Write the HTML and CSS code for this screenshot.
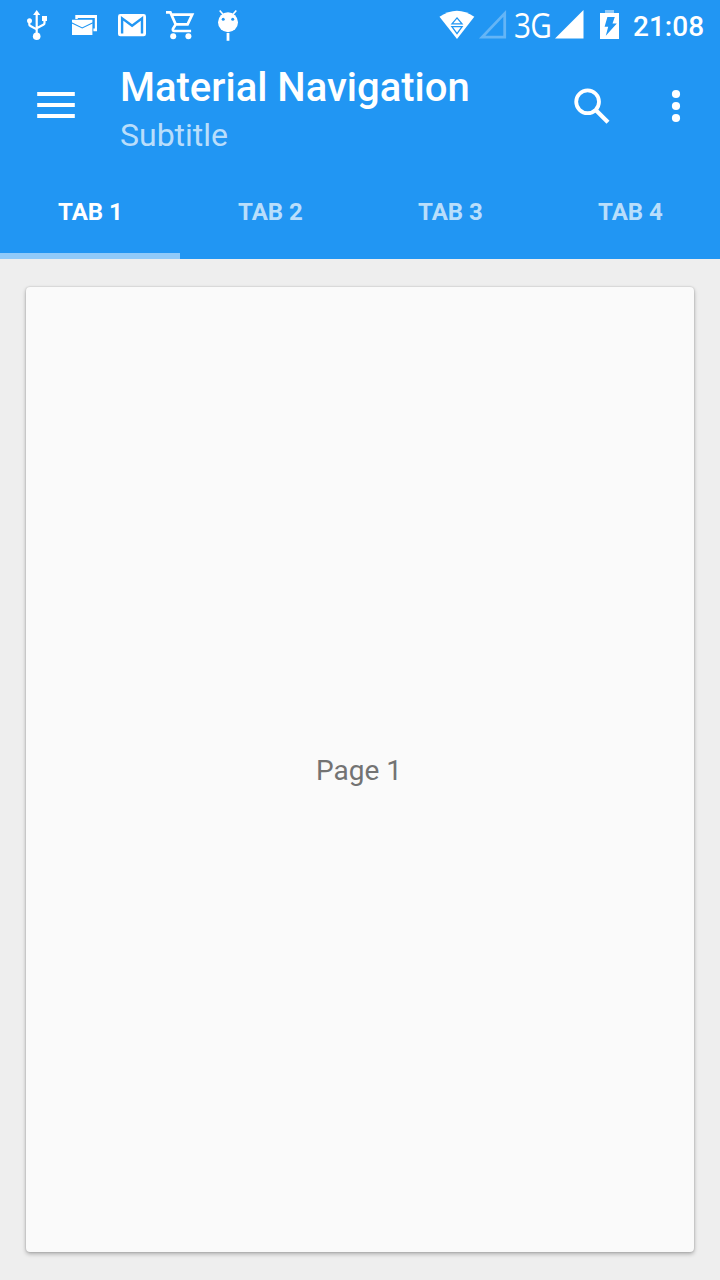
FILE: index.html
```html
<!DOCTYPE html>
<html lang="en">
<head>
<meta charset="utf-8">
<title>Material Navigation</title>
<link rel="stylesheet" href="styles.css">
</head>
<body>
<div class="screen">
  <header class="appbar">
    <div class="status">
      <div class="notifications">
        <svg width="48" height="50" viewBox="13 0 48 50"><g fill="none" stroke="#fff" stroke-width="2.2"><path d="M36.7 14V36M29.3 21v3.2q0 1.2 1.2 1.8l6.2 3.4M44.5 20v3q0 1.2-1.2 1.8l-6.6 3.4"/></g><path fill="#fff" d="M36.7 10l3.6 5h-7.2zM42 16h5v5h-5z"/><circle cx="36.7" cy="36.3" r="3.8" fill="#fff"/><circle cx="29.5" cy="20.7" r="2.5" fill="#fff"/></svg>
        <svg width="48" height="50" viewBox="61 0 48 50"><path fill="#fff" d="M75.3 15H97v16.3h-3.6V28.6h1.4V18H77.8v1h-2.5zM72 19.7h20.4V35H72z"/><path d="M71.5 22.7l10.7 5.2 10.7-5.2" fill="none" stroke="#2196f3" stroke-width="1.1"/></svg>
        <svg width="48" height="50" viewBox="109 0 48 50"><rect x="118" y="14" width="28" height="22.3" rx="2.4" fill="#fff"/><path d="M122.1 33.4V18.3l10 7.5 9.9-7.5v15.1" fill="none" stroke="#2196f3" stroke-width="2.4"/></svg>
        <svg width="48" height="50" viewBox="157 0 48 50"><g fill="none" stroke="#fff" stroke-width="2.7"><path d="M166 12.4h4.4l5.3 12-2.6 4.2q-.9 2.3 1.4 2.4h16.6M171.2 14.6h21l-4.6 9.8h-12"/></g><circle cx="173.2" cy="36.3" r="3" fill="#fff"/><circle cx="188.4" cy="36.3" r="3" fill="#fff"/></svg>
        <svg width="48" height="50" viewBox="205 0 48 50"><path d="M219.7 10.5l3.5 4M236.3 10.5l-3.5 4" stroke="#fff" stroke-width="1.6"/><circle cx="228" cy="22.2" r="10" fill="#fff"/><path d="M226.6 33h2.8v7.8h-2.8z" fill="#fff"/><circle cx="223.2" cy="19.3" r="1.5" fill="#2196f3"/><circle cx="232.7" cy="19.3" r="1.5" fill="#2196f3"/></svg>
      </div>
      <div class="system">
        <svg width="38" height="50" viewBox="438 0 38 50"><path fill="#fff" d="M439.5 16.8q17.5-12 34.8 0L457 39z"/><path d="M457 17.9l5 6h-10zM451.9 26.7h10.2L457 33.6z" fill="none" stroke="#2196f3" stroke-width="1.3"/></svg>
        <svg width="34" height="50" viewBox="476 0 34 50"><path d="M504.7 13.4v23.7h-22.5z" fill="none" stroke="#64b5f6" stroke-width="2.8"/></svg>
        <span class="network">3G</span>
        <svg width="38" height="50" viewBox="552 0 38 50"><path d="M583.5 10v28.6H555z" fill="#fff"/></svg>
        <svg width="36" height="50" viewBox="590 0 36 50"><path d="M605 10h9v3h-9z" fill="#90caf9"/><path d="M600 13h19v26h-19z" fill="#fff"/><path d="M607.4 17h7.4l-2.3 6.4h4.3L605.8 35.8l2.4-9h-3.6z" fill="#2196f3"/></svg>
        <time class="clock">21:08</time>
      </div>
    </div>
    <div class="toolbar">
      <button class="icon-button" aria-label="Menu"><svg width="60" height="60" viewBox="26 75 60 60"><path d="M37.2 92h37.6v4H37.2zM37.2 103h37.6v4H37.2zM37.2 114h37.6v4H37.2z" fill="#fff"/></svg></button>
      <div class="titles">
        <h1 class="title">Material Navigation</h1>
        <p class="subtitle">Subtitle</p>
      </div>
      <button class="icon-button" aria-label="Search"><svg width="60" height="60" viewBox="562 75 60 60"><g fill="none" stroke="#fff"><circle cx="587.6" cy="101.8" r="11.4" stroke-width="3.8"/><path d="M596.2 110.4l11.8 11.8" stroke-width="4.2"/></g></svg></button>
      <button class="icon-button" aria-label="More"><svg width="60" height="60" viewBox="646 75 60 60"><g fill="#fff"><circle cx="676" cy="94" r="4.1"/><circle cx="676" cy="106" r="4.1"/><circle cx="676" cy="118" r="4.1"/></g></svg></button>
    </div>
    <nav class="tabs">
      <a class="tab active">TAB 1</a>
      <a class="tab">TAB 2</a>
      <a class="tab">TAB 3</a>
      <a class="tab">TAB 4</a>
    </nav>
  </header>
  <main class="page">
    <section class="card">Page 1</section>
  </main>
</div>
</body>
</html>
```
FILE: styles.css
```css
* { box-sizing: border-box; }
body { margin: 0; font-family: Roboto, sans-serif; }
svg { display: block; flex: none; }
.screen { width: 720px; height: 1280px; display: flex; flex-direction: column; background: #eee; overflow: hidden; }
.appbar { flex: none; height: 259px; background: #2196f3; color: #fff; }
.status { height: 50px; display: flex; justify-content: space-between; padding: 0 16px 0 13px; }
.notifications, .system { display: flex; }
.network { width: 42px; padding-left: 4px; font: 35px/49px "Open Sans", sans-serif; letter-spacing: -1px; white-space: nowrap; transform: scaleX(.85); transform-origin: 4px 50%; }
.clock { width: 78px; padding-left: 7px; font-size: 28px; font-weight: 500; line-height: 53px; white-space: nowrap; }
.toolbar { height: 113px; display: flex; padding: 0 14px 0 26px; }
.icon-button { width: 60px; height: 60px; margin: 25px 0 0; padding: 0; border: 0; background: none; }
.icon-button + .icon-button { margin-left: 24px; }
.titles { flex: 1; padding: 14px 0 0 34px; }
.title { margin: 0; font-size: 40px; font-weight: 500; line-height: 48px; white-space: nowrap; }
.subtitle { margin: 3px 0 0; font-size: 32px; line-height: 40px; color: rgba(255, 255, 255, .7); }
.tabs { height: 96px; display: flex; }
.tab { flex: 1; padding-left: 1px; border-bottom: 6px solid transparent; text-align: center; font-size: 24px; font-weight: 700; line-height: 99px; color: rgba(255, 255, 255, .7); }
.tab.active { color: #fff; border-bottom-color: #90caf9; }
.page { flex: 1; display: flex; padding: 28px 26px; }
.card { flex: 1; display: flex; align-items: center; justify-content: center; padding: 2px 2px 0 0; border-radius: 4px; background: #fafafa; color: #737373; font-size: 28px; box-shadow: 0 2px 4px rgba(0, 0, 0, .28), 0 0 2px rgba(0, 0, 0, .2); }
```
